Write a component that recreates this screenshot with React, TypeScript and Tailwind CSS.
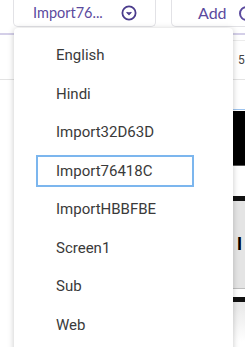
const items = ["English", "Hindi", "Import32D63D", "Import76418C", "ImportHBBFBE", "Screen1", "Sub", "Web"];
const selected = "Import76418C";

function CircleChevron() {
  return (
    <svg width="16" height="16" viewBox="0 0 16 16" fill="none" className="shrink-0 text-[#4a3b8c]">
      <circle cx="8" cy="8" r="6.6" stroke="currentColor" strokeWidth="1.8" />
      <path d="M5.6 7.2 8 9.6l2.4-2.4" fill="currentColor" stroke="currentColor" strokeWidth="1.2" strokeLinejoin="round" />
    </svg>
  );
}

export default function App() {
  return (
    <div className="relative h-[347px] w-[245px] overflow-hidden bg-white font-['Lato',sans-serif]">
      {/* toolbar behind the menu */}
      <div className="flex h-[33px] items-start gap-[15px] pl-[13px]">
        <div className="flex h-[27px] w-[143px] shrink-0 items-center justify-between rounded-b-[5px] border border-t-0 border-[#e2e2e6] pl-[19px] pr-[18px] text-[14.5px] text-[#5b4a9e]">
          <span>Import76...</span>
          <CircleChevron />
        </div>
        <div className="flex h-[27px] w-[120px] shrink-0 items-center gap-[12px] rounded-b-[5px] border border-t-0 border-[#e2e2e6] pl-[26px] text-[16px] text-[#5b4a9e]">
          <span>Add</span>
          <span className="h-[15px] w-[15px] rounded-full border-2 border-[#5b4a9e]" />
        </div>
      </div>
      <div className="h-[2px] bg-[#d4cfe8]" />
      <div className="ml-[20px] mt-[5px] border-t border-[#ececec]" />
      <div className="flex h-[38px] items-center pl-[238px] font-['Roboto',sans-serif] text-[12px] text-[#444]">
        <span>5</span>
      </div>
      <div className="h-px bg-[#e3e3e3]" />
      <div className="ml-[20px] mt-[29px] flex flex-col">
        <div className="h-px bg-[#9cc3ee]" />
        <div className="mt-[1px] h-[54px] bg-black" />
        <div className="h-px bg-[#555]" />
        <div className="h-[30px] bg-white" />
        <div className="h-[5px] bg-[#111]" />
        <div className="flex h-[87px] items-center bg-[#e4e4e4] pl-[217px] font-['Liberation_Sans',sans-serif] text-[18px] font-bold text-black">
          I
        </div>
        <div className="h-px bg-[#bdbdbd]" />
        <div className="h-[8px] bg-white" />
        <div className="h-[5px] bg-[#111]" />
        <div className="h-[40px] bg-gradient-to-b from-[#e8e8e8] to-white" />
      </div>

      {/* open dropdown menu */}
      <div className="absolute left-[14px] top-[28px] h-[330px] w-[219px] rounded-t-[4px] bg-white pt-[8px] shadow-[0_1px_6px_rgba(0,0,0,0.22)]">
        {items.map((item) => (
          <div key={item} className="flex h-[38.5px] items-center">
            <div
              className={
                item === selected
                  ? "ml-[22px] flex h-[32px] w-[158px] items-center border-2 border-[#7cb6ee] pl-[18px] font-['Roboto',sans-serif] text-[15px] text-[#3a3a3a]"
                  : "ml-[22px] flex h-[32px] w-[158px] items-center pl-[20px] font-['Roboto',sans-serif] text-[15px] text-[#3a3a3a]"
              }
            >
              {item}
            </div>
          </div>
        ))}
      </div>
    </div>
  );
}
